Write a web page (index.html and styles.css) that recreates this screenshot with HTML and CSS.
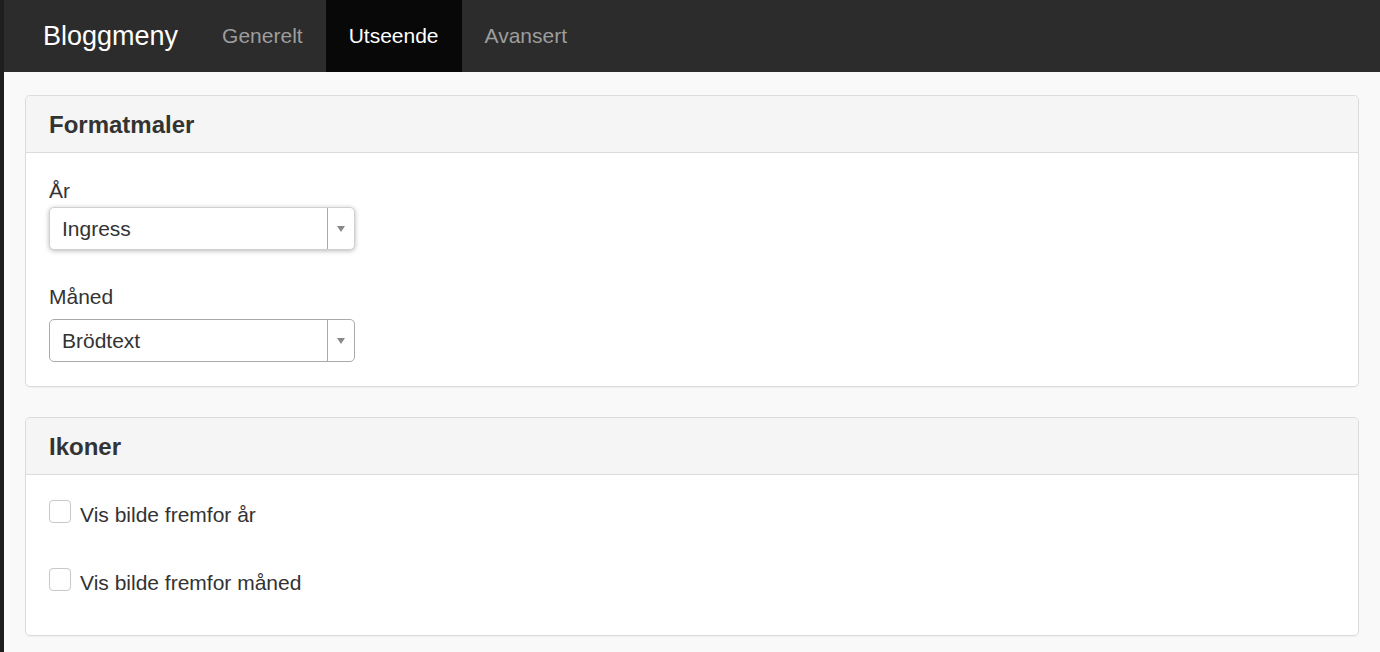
FILE: index.html
```html
<!DOCTYPE html>
<html lang="no">
<head>
<meta charset="utf-8">
<title>Bloggmeny</title>
<link rel="stylesheet" href="styles.css">
</head>
<body>
<div class="strip"></div>
<div class="page">
  <nav class="navbar">
    <span class="brand">Bloggmeny</span>
    <ul class="nav">
      <li class="nav-item">Generelt</li>
      <li class="nav-item active">Utseende</li>
      <li class="nav-item">Avansert</li>
    </ul>
  </nav>
  <main class="content">
    <section class="panel">
      <div class="panel-heading"><h3 class="panel-title">Formatmaler</h3></div>
      <div class="panel-body panel-body-form">
        <div class="form-group form-group-first">
          <label class="label">År</label>
          <div class="select select-focus">
            <span class="select-value">Ingress</span>
            <span class="select-arrow"><span class="caret"></span></span>
          </div>
        </div>
        <div class="form-group form-group-second">
          <label class="label">Måned</label>
          <div class="select">
            <span class="select-value">Brödtext</span>
            <span class="select-arrow"><span class="caret"></span></span>
          </div>
        </div>
      </div>
    </section>
    <section class="panel">
      <div class="panel-heading"><h3 class="panel-title">Ikoner</h3></div>
      <div class="panel-body panel-body-checks">
        <label class="check"><span class="box"></span><span>Vis bilde fremfor år</span></label>
        <label class="check"><span class="box"></span><span>Vis bilde fremfor måned</span></label>
      </div>
    </section>
  </main>
</div>
</body>
</html>
```
FILE: styles.css
```css
html, body {
  margin: 0;
  padding: 0;
  height: 100%;
}
body {
  display: flex;
  background: #f9f9f9;
  font-family: "Liberation Sans", Arial, Helvetica, sans-serif;
  color: #333;
  font-size: 21px;
  overflow: hidden;
}
.strip {
  width: 4px;
  flex: 0 0 4px;
  background: #1e1e1e;
}
.page {
  flex: 1;
  display: flex;
  flex-direction: column;
  min-width: 0;
}
.navbar {
  height: 72px;
  background: #2c2c2c;
  display: flex;
  align-items: stretch;
  flex: 0 0 72px;
}
.brand {
  color: #fff;
  font-size: 27px;
  padding: 0 21px 0 39px;
  line-height: 72px;
}
.nav {
  list-style: none;
  margin: 0;
  padding: 0;
  display: flex;
}
.nav-item {
  color: #9d9d9d;
  font-size: 21px;
  padding: 0 23px;
  line-height: 72px;
}
.nav-item.active {
  background: #080808;
  color: #fff;
}
.content {
  padding: 23px 21px 0 21px;
}
.panel {
  background: #fff;
  border: 1px solid #dcdcdc;
  border-radius: 5px;
  margin-bottom: 30px;
  box-shadow: 0 1px 1px rgba(0,0,0,0.04);
}
.panel-heading {
  background: #f5f5f5;
  border-bottom: 1px solid #dcdcdc;
  border-radius: 5px 5px 0 0;
  padding: 15px 23px 13px;
}
.panel-title {
  margin: 0;
  font-size: 24px;
  line-height: 28px;
  font-weight: bold;
  color: #333;
}
.panel-body-form {
  padding: 23px 23px 24px;
}
.label {
  display: block;
  line-height: 30px;
}
.form-group-first .label {
  margin-bottom: 1px;
}
.form-group-second {
  margin-top: 32px;
}
.form-group-second .label {
  margin-bottom: 7px;
}
.select {
  width: 306px;
  height: 43px;
  box-sizing: border-box;
  border: 1px solid #aaa;
  border-radius: 5px;
  background: #fff;
  display: flex;
  align-items: stretch;
}
.select-focus {
  border-color: #d0d0d0;
  box-shadow: 0 1px 5px rgba(0,0,0,0.28);
}
.select-value {
  flex: 1;
  padding: 1px 0 0 12px;
  line-height: 40px;
  color: #333;
}
.select-arrow {
  width: 26px;
  border-left: 1px solid #aaa;
  display: flex;
  align-items: center;
  justify-content: center;
}
.caret {
  width: 0;
  height: 0;
  border-left: 4px solid transparent;
  border-right: 4px solid transparent;
  border-top: 6px solid #888;
}
.panel-body-checks {
  padding: 25px 23px 37px;
  display: flex;
  flex-direction: column;
  gap: 38px;
}
.check {
  display: flex;
  align-items: flex-start;
  line-height: 30px;
  gap: 9px;
}
.box {
  width: 22px;
  height: 23px;
  box-sizing: border-box;
  border: 1px solid #c8c8c8;
  border-radius: 4px;
  background: #fff;
  flex: 0 0 22px;
}
```
